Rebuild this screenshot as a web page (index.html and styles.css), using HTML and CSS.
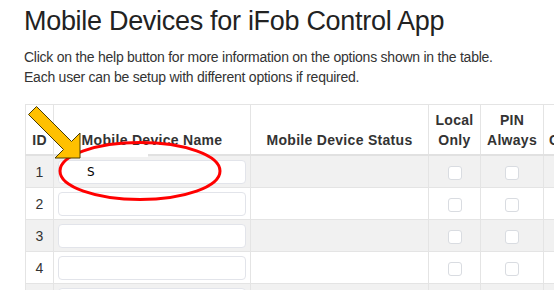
FILE: index.html
```html
<!DOCTYPE html>
<html>
<head>
<meta charset="utf-8">
<link rel="stylesheet" href="styles.css">
</head>
<body>
<div class="page">
  <h1 class="title">Mobile Devices for iFob Control App</h1>
  <p class="intro">Click on the help button for more information on the options shown in the table.<br>Each user can be setup with different options if required.</p>
  <div class="table-wrap">
    <table class="devices">
      <colgroup>
        <col class="c-id"><col class="c-name"><col class="c-status"><col class="c-local"><col class="c-pin"><col class="c-geo">
      </colgroup>
      <thead>
        <tr>
          <th>ID</th>
          <th>Mobile Device Name</th>
          <th>Mobile Device Status</th>
          <th>Local<br>Only</th>
          <th>PIN<br>Always</th>
          <th>Use<br>Geofence</th>
        </tr>
      </thead>
      <tbody>
        <tr><td>1</td><td><input class="name-input" type="text" value="S"></td><td></td><td><span class="chk"></span></td><td><span class="chk"></span></td><td><span class="chk"></span></td></tr>
        <tr><td>2</td><td><input class="name-input" type="text"></td><td></td><td><span class="chk"></span></td><td><span class="chk"></span></td><td><span class="chk"></span></td></tr>
        <tr><td>3</td><td><input class="name-input" type="text"></td><td></td><td><span class="chk"></span></td><td><span class="chk"></span></td><td><span class="chk"></span></td></tr>
        <tr><td>4</td><td><input class="name-input" type="text"></td><td></td><td><span class="chk"></span></td><td><span class="chk"></span></td><td><span class="chk"></span></td></tr>
        <tr><td>5</td><td><input class="name-input" type="text"></td><td></td><td><span class="chk"></span></td><td><span class="chk"></span></td><td><span class="chk"></span></td></tr>
      </tbody>
    </table>
  </div>
</div>
<div class="patch"></div>
<svg class="annot" width="554" height="290" viewBox="0 0 554 290">
  <ellipse cx="140" cy="171" rx="80" ry="28.5" fill="none" stroke="#ff0000" stroke-width="3"/>
  <polygon points="36.5,106.5 71.5,141.5 80,133 80,158 55,158 63.5,149.5 28.5,114.5" fill="#ffc000" stroke="#4a3c00" stroke-width="1" stroke-linejoin="miter"/>
</svg>
</body>
</html>
```

FILE: styles.css
```css
html, body {
  margin: 0;
  padding: 0;
  background: #fff;
  overflow: hidden;
}
body {
  width: 554px;
  height: 290px;
  position: relative;
  font-family: "Liberation Sans", Arial, sans-serif;
  color: #333;
}
.page {
  padding: 6px 0 0 24px;
}
.title {
  margin: 0 0 10px 0;
  font-size: 27px;
  line-height: 31px;
  letter-spacing: -0.3px;
  font-weight: normal;
  color: #222;
}
.intro {
  margin: 0 0 17px 0;
  font-size: 14px;
  line-height: 20px;
  letter-spacing: -0.24px;
  color: #333;
}
.table-wrap {
  margin-left: 1px;
  width: 700px;
}
.devices {
  border-collapse: collapse;
  border: 1px solid #e1e1e1;
  font-size: 14px;
  table-layout: fixed;
  width: 594px;
}
.c-id { width: 28px; }
.c-name { width: 197px; }
.c-status { width: 178px; }
.c-local { width: 52px; }
.c-pin { width: 63px; }
.c-geo { width: 76px; }
.devices th {
  border: 1px solid #e4e4e4;
  border-bottom: 2px solid #e1e1e1;
  padding: 5px 5px 4px;
  line-height: 20px;
  font-weight: bold;
  letter-spacing: 0.3px;
  text-align: center;
  vertical-align: bottom;
  color: #333;
  white-space: nowrap;
}
.devices td {
  border: 1px solid #e4e4e4;
  padding: 4px 4px 3px;
  text-align: center;
  vertical-align: middle;
  height: 24px;
  line-height: 20px;
}
.devices tbody tr:nth-child(odd) td {
  background: #f1f1f1;
}
.name-input {
  display: block;
  box-sizing: border-box;
  width: 188px;
  height: 24px;
  margin: 0 auto;
  border: 1px solid #e2e4ea;
  border-radius: 4px;
  background: #fff;
  padding: 0 0 0 28px;
  font-family: "DejaVu Sans", sans-serif;
  font-size: 12px;
  color: #000;
  outline: none;
}
.chk {
  display: inline-block;
  box-sizing: border-box;
  width: 14px;
  height: 14px;
  border: 1px solid #d9dce1;
  border-radius: 3px;
  background: #fff;
  vertical-align: middle;
}
.patch {
  position: absolute;
  left: 80px;
  top: 154px;
  width: 68px;
  height: 3px;
  background: #fff;
}
.annot {
  position: absolute;
  left: 0;
  top: 0;
  pointer-events: none;
}
```
